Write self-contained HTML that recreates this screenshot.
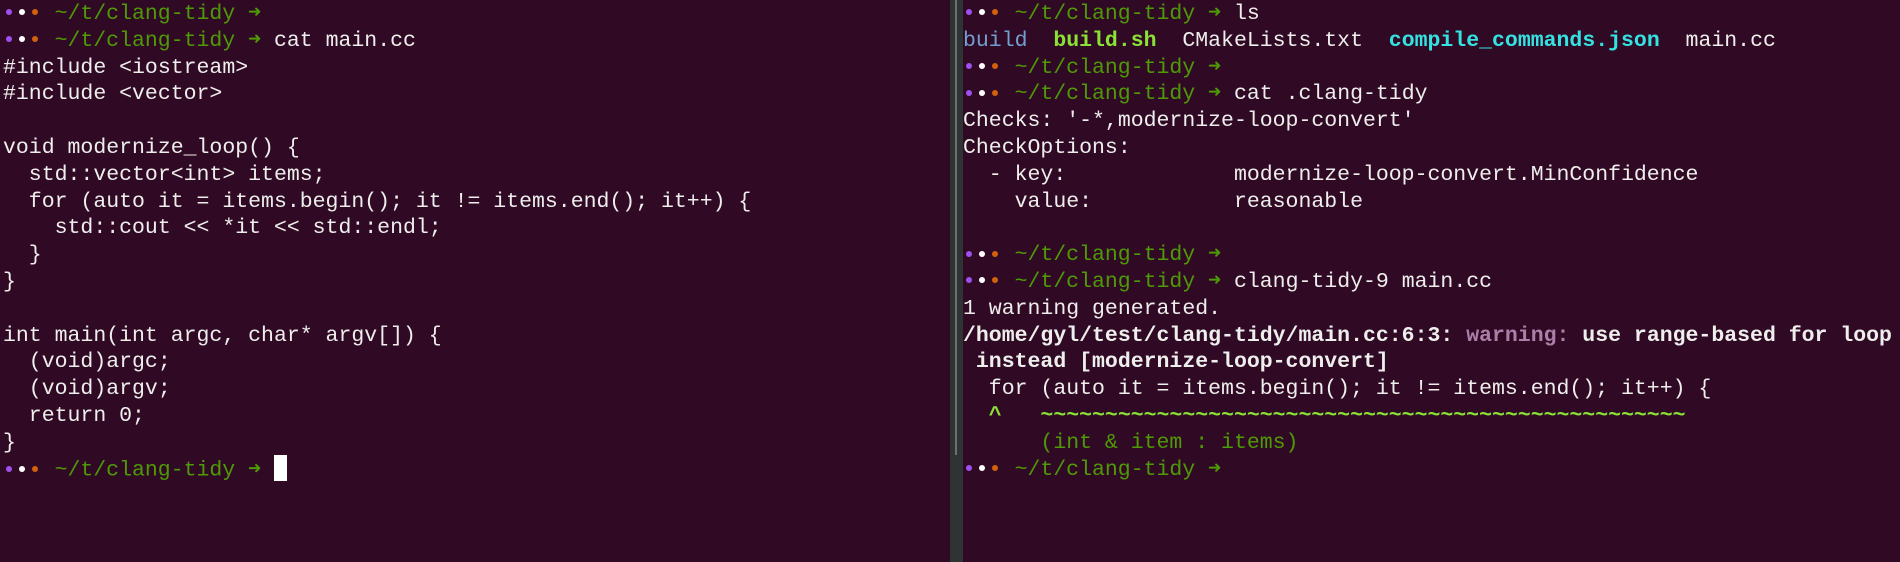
<!DOCTYPE html>
<html><head><meta charset="utf-8"><style>
html,body{margin:0;padding:0;width:1900px;height:562px;background:#300a24;overflow:hidden}
.pane{position:absolute;top:1px;font-family:"Liberation Mono",monospace;font-size:21.5px;color:#eeeeec}
.l{height:26.8px;line-height:26.8px;white-space:pre}
#left{left:3px}
#right{left:963px}
.div{position:absolute;left:950px;top:0;width:13px;height:562px;background:#2e3434}
.sb{position:absolute;left:955px;top:0;width:2px;height:455px;background:#6c7070}
.d{display:inline-block;width:12.9px;text-align:center;vertical-align:middle;position:relative;top:-2px;line-height:6px}
.d i{display:inline-block;width:6px;height:6px;border-radius:50%}
.g{color:#4e9a06}.b{font-weight:bold}
.a{font-size:24px;line-height:20px}
.cur{display:inline-block;width:13px;height:26px;background:#fff;vertical-align:middle;position:relative;top:-2px}
</style></head><body>
<div class="div"></div><div class="sb"></div>
<div class="pane" id="left"><div class="l"><span class="d"><i style="background:#a050f0"></i></span><span class="d"><i style="background:#fff"></i></span><span class="d"><i style="background:#d2600e"></i></span> <span class="g">~/t/clang-tidy</span> <span class="g b">➜</span></div><div class="l"><span class="d"><i style="background:#a050f0"></i></span><span class="d"><i style="background:#fff"></i></span><span class="d"><i style="background:#d2600e"></i></span> <span class="g">~/t/clang-tidy</span> <span class="g b">➜</span> cat main.cc</div><div class="l">#include &lt;iostream&gt;</div><div class="l">#include &lt;vector&gt;</div><div class="l"> </div><div class="l">void modernize_loop() {</div><div class="l">  std::vector&lt;int&gt; items;</div><div class="l">  for (auto it = items.begin(); it != items.end(); it++) {</div><div class="l">    std::cout &lt;&lt; *it &lt;&lt; std::endl;</div><div class="l">  }</div><div class="l">}</div><div class="l"> </div><div class="l">int main(int argc, char* argv[]) {</div><div class="l">  (void)argc;</div><div class="l">  (void)argv;</div><div class="l">  return 0;</div><div class="l">}</div><div class="l"><span class="d"><i style="background:#a050f0"></i></span><span class="d"><i style="background:#fff"></i></span><span class="d"><i style="background:#d2600e"></i></span> <span class="g">~/t/clang-tidy</span> <span class="g b">➜</span> <span class="cur"></span></div></div>
<div class="pane" id="right"><div class="l"><span class="d"><i style="background:#a050f0"></i></span><span class="d"><i style="background:#fff"></i></span><span class="d"><i style="background:#d2600e"></i></span> <span class="g">~/t/clang-tidy</span> <span class="g b">➜</span> ls</div><div class="l"><span style="color:#729fcf">build</span>  <span class="b" style="color:#8ae234">build.sh</span>  CMakeLists.txt  <span class="b" style="color:#34e2e2">compile_commands.json</span>  main.cc</div><div class="l"><span class="d"><i style="background:#a050f0"></i></span><span class="d"><i style="background:#fff"></i></span><span class="d"><i style="background:#d2600e"></i></span> <span class="g">~/t/clang-tidy</span> <span class="g b">➜</span></div><div class="l"><span class="d"><i style="background:#a050f0"></i></span><span class="d"><i style="background:#fff"></i></span><span class="d"><i style="background:#d2600e"></i></span> <span class="g">~/t/clang-tidy</span> <span class="g b">➜</span> cat .clang-tidy</div><div class="l">Checks: '-*,modernize-loop-convert'</div><div class="l">CheckOptions:</div><div class="l">  - key:             modernize-loop-convert.MinConfidence</div><div class="l">    value:           reasonable</div><div class="l"> </div><div class="l"><span class="d"><i style="background:#a050f0"></i></span><span class="d"><i style="background:#fff"></i></span><span class="d"><i style="background:#d2600e"></i></span> <span class="g">~/t/clang-tidy</span> <span class="g b">➜</span></div><div class="l"><span class="d"><i style="background:#a050f0"></i></span><span class="d"><i style="background:#fff"></i></span><span class="d"><i style="background:#d2600e"></i></span> <span class="g">~/t/clang-tidy</span> <span class="g b">➜</span> clang-tidy-9 main.cc</div><div class="l">1 warning generated.</div><div class="l b">/home/gyl/test/clang-tidy/main.cc:6:3: <span style="color:#ad7fa8">warning:</span> use range-based for loop</div><div class="l b"> instead [modernize-loop-convert]</div><div class="l">  for (auto it = items.begin(); it != items.end(); it++) {</div><div class="l b" style="color:#8ae234">  ^   ~~~~~~~~~~~~~~~~~~~~~~~~~~~~~~~~~~~~~~~~~~~~~~~~~~</div><div class="l g">      (int &amp; item : items)</div><div class="l"><span class="d"><i style="background:#a050f0"></i></span><span class="d"><i style="background:#fff"></i></span><span class="d"><i style="background:#d2600e"></i></span> <span class="g">~/t/clang-tidy</span> <span class="g b">➜</span></div></div>
</body></html>
